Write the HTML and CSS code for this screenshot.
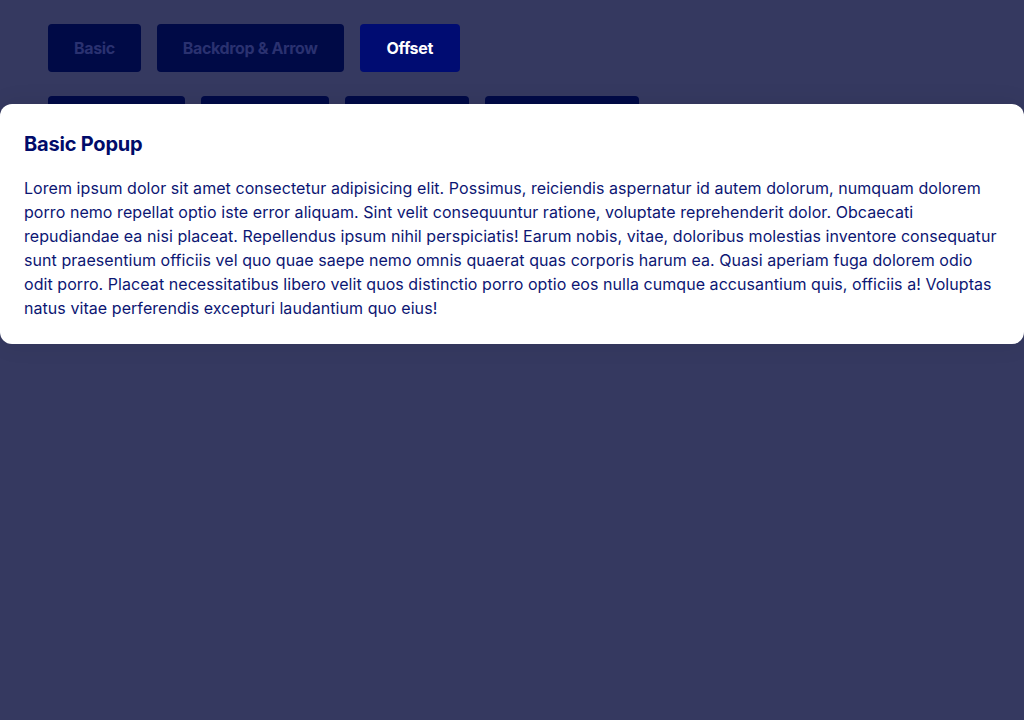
FILE: index.html
```html
<!DOCTYPE html>
<html lang="en">
<head>
<meta charset="utf-8">
<title>Popup</title>
<link rel="stylesheet" href="styles.css">
</head>
<body>
<main class="page">
  <div class="btn-row">
    <button class="btn">Basic</button>
    <button class="btn">Backdrop &amp; Arrow</button>
    <button class="btn btn-active">Offset</button>
  </div>
  <div class="btn-row">
    <button class="btn btn-w1"></button>
    <button class="btn btn-w2"></button>
    <button class="btn btn-w3"></button>
    <button class="btn btn-w4"></button>
  </div>
</main>
<section class="popup">
  <h2 class="popup-title">Basic Popup</h2>
  <p class="popup-text">Lorem ipsum dolor sit amet consectetur adipisicing elit. Possimus, reiciendis aspernatur id autem dolorum, numquam dolorem porro nemo repellat optio iste error aliquam. Sint velit consequuntur ratione, voluptate reprehenderit dolor. Obcaecati repudiandae ea nisi placeat. Repellendus ipsum nihil perspiciatis! Earum nobis, vitae, doloribus molestias inventore consequatur sunt praesentium officiis vel quo quae saepe nemo omnis quaerat quas corporis harum ea. Quasi aperiam fuga dolorem odio odit porro. Placeat necessitatibus libero velit quos distinctio porro optio eos nulla cumque accusantium quis, officiis a! Voluptas natus vitae perferendis excepturi laudantium quo eius!</p>
</section>
</body>
</html>
```
FILE: styles.css
```css
html, body {
  margin: 0;
  padding: 0;
  height: 100%;
}
body {
  background: #353960;
  font-family: "Inter", "Noto Sans", sans-serif;
  overflow: hidden;
}
.page {
  padding: 24px 48px;
  display: flex;
  flex-direction: column;
  gap: 24px;
}
.btn-row {
  display: flex;
  gap: 16px;
}
.btn {
  height: 48px;
  padding: 0 26px;
  border: none;
  border-radius: 4px;
  background: #000a46;
  color: #2a3170;
  font-family: "Inter", "Noto Sans", sans-serif;
  font-weight: 700;
  font-size: 16px;
  letter-spacing: -0.36px;
}
.btn-active {
  background: #000c72;
  color: #ffffff;
  padding: 0 27px;
}
.btn-w1 { width: 137px; }
.btn-w2 { width: 128px; }
.btn-w3 { width: 124px; }
.btn-w4 { width: 154px; }
.popup {
  position: absolute;
  top: 104px;
  left: 0;
  right: 0;
  background: #ffffff;
  border-radius: 12px;
  padding: 24px;
  box-shadow: 0 0 24px rgba(0, 0, 0, 0.08);
}
.popup-title {
  margin: 0 0 16px;
  font-size: 20px;
  line-height: 32px;
  font-weight: 700;
  color: #000b6a;
  letter-spacing: -0.2px;
}
.popup-text {
  margin: 0;
  font-size: 16px;
  line-height: 24px;
  color: #0c1673;
  letter-spacing: 0.06px;
}
```
